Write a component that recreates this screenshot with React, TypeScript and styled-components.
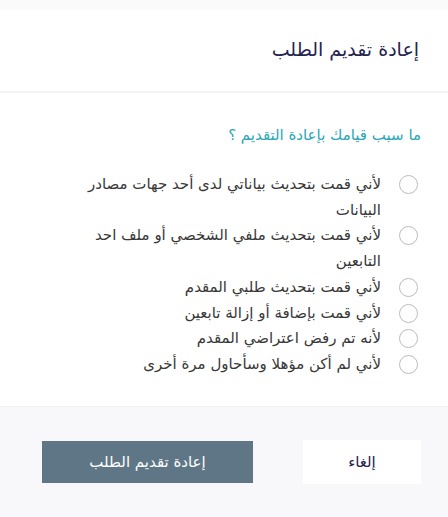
import styled, { createGlobalStyle } from "styled-components";

const GlobalStyle = createGlobalStyle`
  html, body {
    margin: 0;
    padding: 0;
    background: #fafafa;
  }
  body {
    font-family: "DejaVu Sans", "Noto Sans", sans-serif;
  }
`;

const reasons = [
  "لأني قمت بتحديث بياناتي لدى أحد جهات مصادر البيانات",
  "لأني قمت بتحديث ملفي الشخصي أو ملف احد التابعين",
  "لأني قمت بتحديث طلبي المقدم",
  "لأني قمت بإضافة أو إزالة تابعين",
  "لأنه تم رفض اعتراضي المقدم",
  "لأني لم أكن مؤهلا وسأحاول مرة أخرى",
];

const App = () => {
  return (
    <>
      <GlobalStyle />
      <Page>
        <Modal dir="rtl">
          <Header>
            <Title>إعادة تقديم الطلب</Title>
          </Header>
          <Body>
            <Question>ما سبب قيامك بإعادة التقديم ؟</Question>
            <Options>
              {reasons.map((r) => (
                <Option key={r}>
                  <Radio />
                  <Label>{r}</Label>
                </Option>
              ))}
            </Options>
          </Body>
          <Footer>
            <CancelButton>إلغاء</CancelButton>
            <SubmitButton>إعادة تقديم الطلب</SubmitButton>
          </Footer>
        </Modal>
      </Page>
    </>
  );
};

export default App;

const Page = styled.div`
  width: 448px;
  height: 517px;
  padding-top: 10px;
  box-sizing: border-box;
  overflow: hidden;
`;

const Modal = styled.div`
  background: #ffffff;
  display: flex;
  flex-direction: column;
  height: 507px;
`;

const Header = styled.div`
  height: 77px;
  display: flex;
  align-items: center;
  padding: 0 29px 4px 0;
  border-bottom: 2px solid #f3f2f8;
`;

const Title = styled.h2`
  margin: 0;
  font-size: 19px;
  font-weight: normal;
  color: #25244f;
`;

const Body = styled.div`
  flex: 1;
  padding: 33px 27px 0 0;
`;

const Question = styled.p`
  margin: 0;
  font-size: 15px;
  color: #2aa6b8;
`;

const Options = styled.div`
  margin-top: 28px;
  display: flex;
  flex-direction: column;
`;

const Option = styled.label`
  display: flex;
  align-items: flex-start;
  gap: 18px;
  padding-right: 3px;
`;

const Radio = styled.span`
  flex: none;
  width: 17px;
  height: 17px;
  margin-top: 3px;
  border: 1.5px solid #bcbcbc;
  border-radius: 50%;
`;

const Label = styled.span`
  width: 302px;
  font-size: 15px;
  line-height: 25.7px;
  color: #383838;
`;

const Footer = styled.div`
  height: 110px;
  background: #f8f7fa;
  border-top: 1px solid #f1f0f4;
  display: flex;
  align-items: center;
  padding: 0 27px 0 0;
  gap: 50px;
`;

const CancelButton = styled.button`
  width: 118px;
  height: 44px;
  border: none;
  background: #ffffff;
  font-family: inherit;
  font-size: 15px;
  color: #25244f;
`;

const SubmitButton = styled.button`
  width: 211px;
  height: 42px;
  border: none;
  background: #5e7686;
  font-family: inherit;
  font-size: 15px;
  color: #ffffff;
`;
